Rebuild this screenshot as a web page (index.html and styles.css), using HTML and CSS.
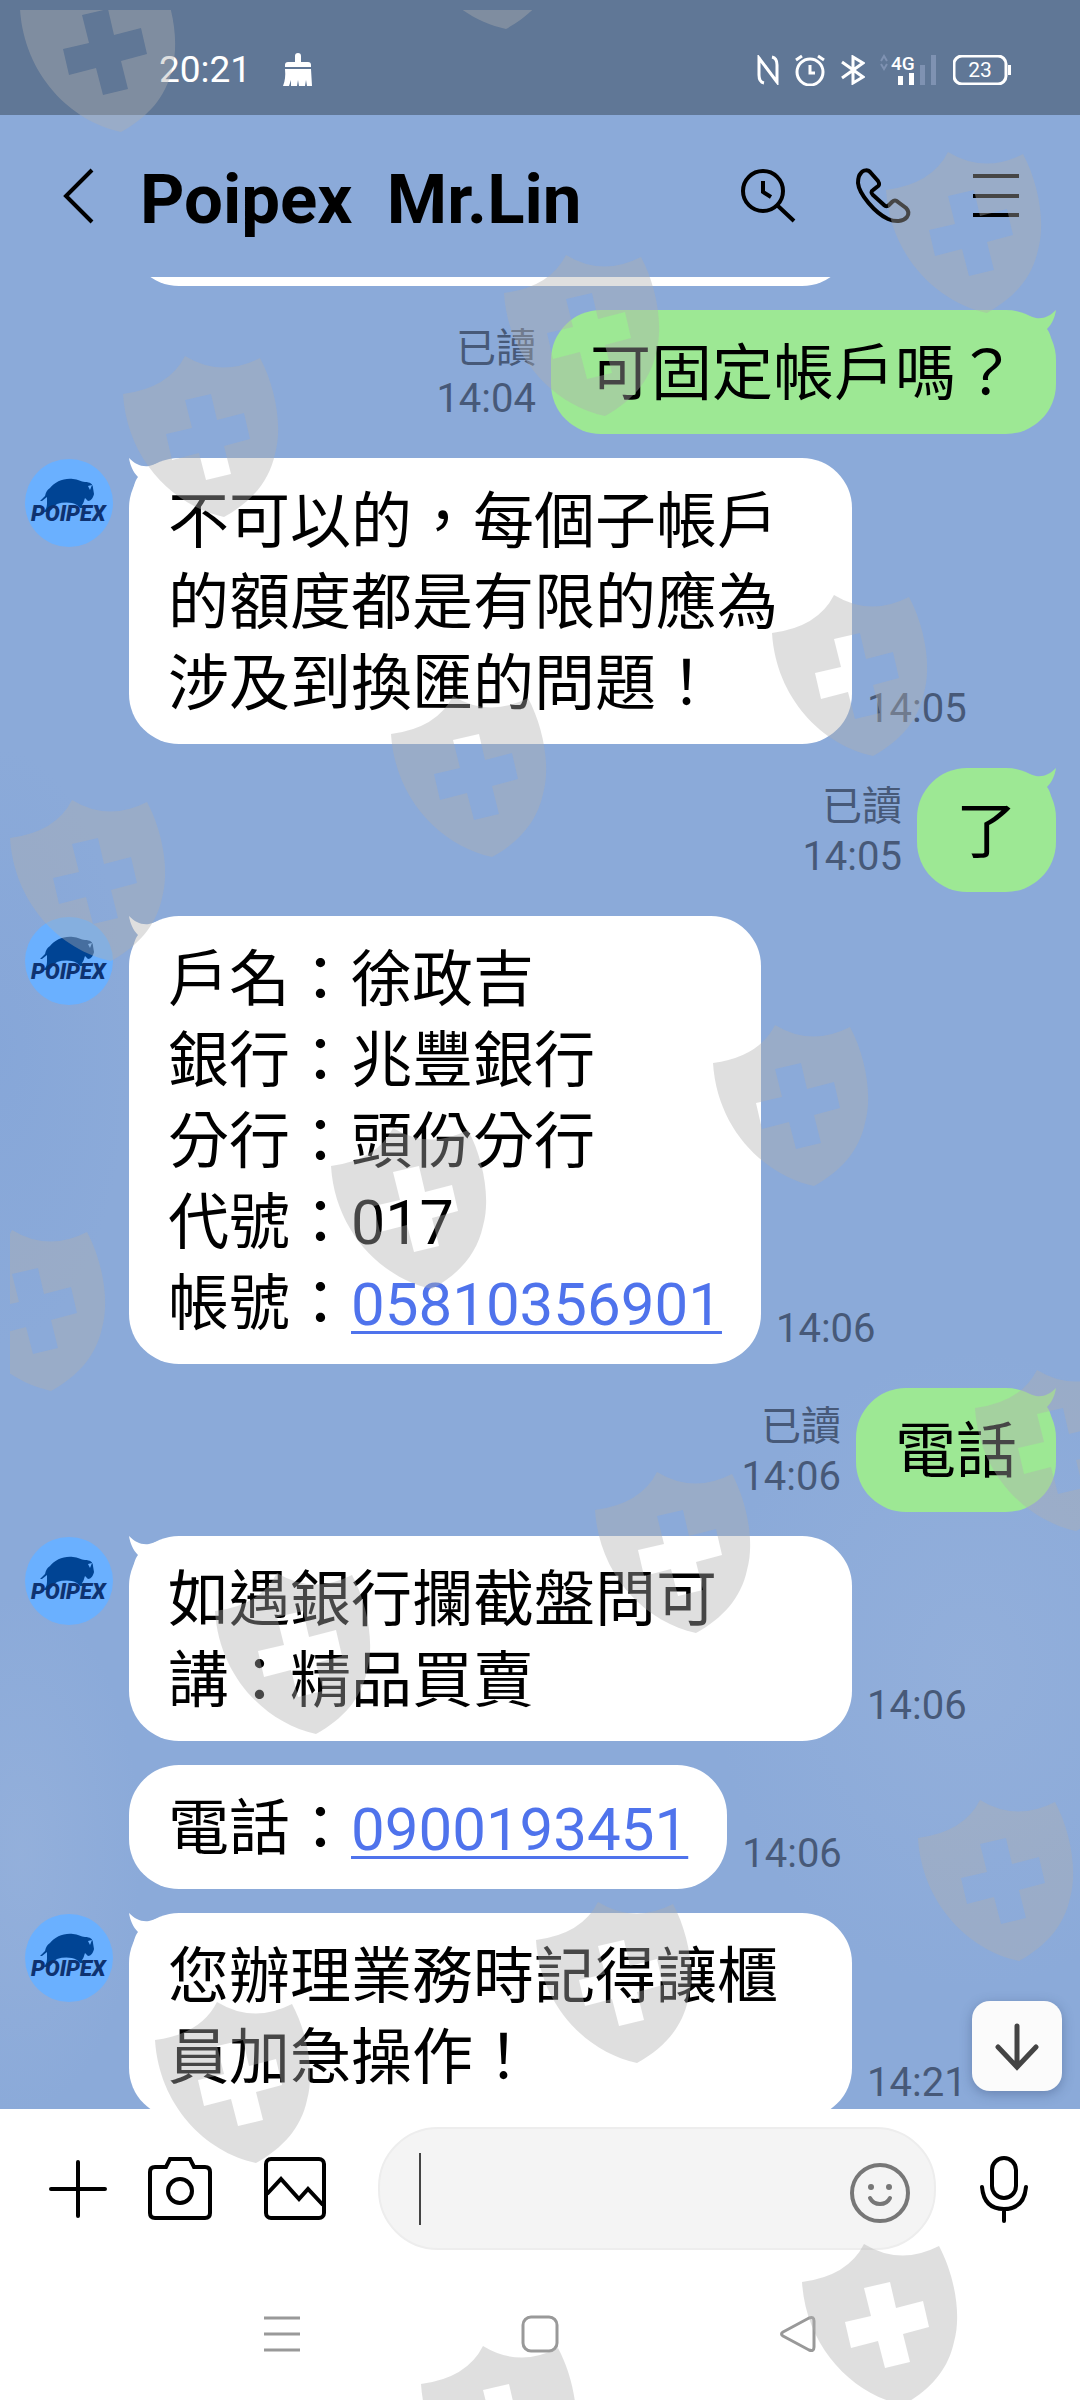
FILE: index.html
```html
<!DOCTYPE html>
<html lang="zh-TW">
<head>
<meta charset="utf-8">
<meta name="viewport" content="width=device-width, initial-scale=1">
<title>Poipex Mr.Lin</title>
<link rel="stylesheet" href="styles.css">
</head>
<body>
<svg class="defs" width="0" height="0" aria-hidden="true">
  <defs>
    <symbol id="tail" viewBox="0 0 36 36"><path d="M0 0C6 6 12 9 20 8L34 4V30L4 36C4 29 6 23 9 19C4 14 1 7 0 0Z"/></symbol>
    <symbol id="avatar" viewBox="0 0 90 90">
      <circle cx="45" cy="45" r="44" fill="#6ab0ff"/>
      <path fill="#004494" d="M16 43L21 38C22 34 23 32 26 30C31 24 39 20 49 21C54 21 57 24 61 24C66 24 69 26 69 30L70 36C69 40 67 43 64 43L61 40C60 42 60 45 58 47L61 50H56L53 47C47 44 40 44 33 46L29 49C28 52 26 54 19 54C23 51 23 48 23 44V39L18 43Z"/>
      <path d="M64 28l4-1-2 5z" fill="#6ab0ff"/>
      <text x="7" y="63" font-family="Roboto, sans-serif" font-size="22" font-weight="900" font-style="italic" fill="#0e3270">POIPEX</text>
    </symbol>
    <symbol id="shield" viewBox="0 0 160 166">
      <path fill-rule="evenodd" d="M0 40Q46 34 62 2Q98 24 137 4C152 32 160 72 152 100C146 128 128 148 101 163C50 152 4 105 0 40ZM62 46L69 74L43 80L49 106L76 99L83 126L108 120L101 92L127 85L121 59L94 66L88 40Z"/>
    </symbol>
  </defs>
</svg>

<div class="screen">
  <div class="status">
    <span class="clock">20:21</span>
    <svg class="broom" width="30" height="34" viewBox="0 0 30 34" fill="#fff"><path d="M12 3Q12 0 15 0T18 3V9H25Q28 9 28 12V14H2V12Q2 9 5 9H12ZM2 16H28L29 33H24L23 27L22 33H16L15 27L14 33H8L8 27L6 33H0Q3 26 2 16Z"/></svg>
    <div class="indicators">
      <svg width="22" height="30" viewBox="0 0 22 30" fill="none" stroke="#fff" stroke-width="3"><path d="M7 28Q2 27 2 20V3L20 27V10Q20 3 15 2M2 3L14 19M8 11L20 27"/></svg>
      <svg width="30" height="32" viewBox="0 0 30 32" fill="none" stroke="#fff" stroke-width="3"><circle cx="15" cy="18" r="13"/><path d="M15 11V19H20M1 6L7 2M29 6L23 2"/></svg>
      <svg width="24" height="30" viewBox="0 0 24 30" fill="none" stroke="#fff" stroke-width="3"><path d="M1 7L22 22L12 28V2L22 8L1 23"/></svg>
      <svg class="signal" width="56" height="32" viewBox="0 0 56 32" fill="#fff"><path d="M0 7L3 2L6 7M0 10L3 15L6 10" fill="none" stroke="#7f92b2" stroke-width="2"/><text x="10" y="16" font-family="Roboto, sans-serif" font-size="19" font-weight="500">4G</text><path d="M17 22h5v9h-5zM28 19h5v12h-5z"/><path fill="#7f92b2" d="M39 11h5v20h-5zM50 1h5v30h-5z"/></svg>
      <svg width="58" height="30" viewBox="0 0 58 30"><rect x="1" y="1" width="52" height="28" rx="8" fill="none" stroke="#fff" stroke-width="3"/><path d="M55 10h3v10h-3z" fill="#fff"/><text x="27" y="22" text-anchor="middle" font-family="Roboto, sans-serif" font-size="21" fill="#fff">23</text></svg>
    </div>
  </div>

  <header class="header">
    <button class="icon" type="button" aria-label="返回"><svg width="60" height="60" viewBox="0 0 60 60"><path d="M42 4L16 30L42 56"/></svg></button>
    <h1 class="title">Poipex  Mr.Lin</h1>
    <div class="actions">
      <button class="icon" type="button" aria-label="搜尋"><svg width="60" height="60" viewBox="0 0 60 60"><circle cx="23" cy="25" r="20"/><path d="M38 40L54 55M23 15V26L31 31"/></svg></button>
      <button class="icon" type="button" aria-label="通話"><svg width="60" height="60" viewBox="0 0 60 60"><path d="M8 7C10 4 15 3 18 7L25 15C27 18 26 20 24 21L20 24C18 25 18 27 20 29L31 39C33 41 35 40 36 39L39 36C41 34 43 34 45 36L53 42C56 45 56 48 54 51C50 56 42 56 35 53C22 47 6 28 5 17C5 12 6 9 8 7Z"/></svg></button>
      <button class="icon" type="button" aria-label="選單"><svg width="60" height="60" viewBox="0 0 60 60"><path d="M7 10H53M7 30H53M7 49H53"/></svg></button>
    </div>
  </header>

  <main class="chat">
    <div class="log">
      <div class="row earlier"><span class="spacer"></span><div class="bubble full">&nbsp;</div></div>

      <div class="row mine">
        <div class="meta"><span>已讀</span><time>14:04</time></div>
        <div class="bubble">可固定帳戶嗎？<svg class="tail" width="36" height="36"><use href="#tail"/></svg></div>
      </div>

      <div class="row">
        <svg class="face" width="90" height="90"><use href="#avatar"/></svg>
        <div class="bubble">不可以的，每個子帳戶的額度都是有限的應為涉及到換匯的問題！<svg class="tail" width="36" height="36"><use href="#tail"/></svg></div>
        <div class="meta"><time>14:05</time></div>
      </div>

      <div class="row mine">
        <div class="meta"><span>已讀</span><time>14:05</time></div>
        <div class="bubble">了<svg class="tail" width="36" height="36"><use href="#tail"/></svg></div>
      </div>

      <div class="row">
        <svg class="face" width="90" height="90"><use href="#avatar"/></svg>
        <div class="bubble">戶名：徐政吉<br>銀行：兆豐銀行<br>分行：頭份分行<br>代號：017<br>帳號：<a href="tel:05810356901">05810356901</a><svg class="tail" width="36" height="36"><use href="#tail"/></svg></div>
        <div class="meta"><time>14:06</time></div>
      </div>

      <div class="row mine">
        <div class="meta"><span>已讀</span><time>14:06</time></div>
        <div class="bubble">電話<svg class="tail" width="36" height="36"><use href="#tail"/></svg></div>
      </div>

      <div class="row">
        <svg class="face" width="90" height="90"><use href="#avatar"/></svg>
        <div class="bubble">如遇銀行攔截盤問可講：精品買賣<svg class="tail" width="36" height="36"><use href="#tail"/></svg></div>
        <div class="meta"><time>14:06</time></div>
      </div>

      <div class="row">
        <span class="spacer"></span>
        <div class="bubble">電話：<a href="tel:0900193451">0900193451</a></div>
        <div class="meta"><time>14:06</time></div>
      </div>

      <div class="row">
        <svg class="face" width="90" height="90"><use href="#avatar"/></svg>
        <div class="bubble">您辦理業務時記得讓櫃員加急操作！<svg class="tail" width="36" height="36"><use href="#tail"/></svg></div>
        <div class="meta"><time>14:21</time></div>
      </div>
    </div>
    <button class="to-bottom" type="button" aria-label="最新訊息"><svg width="50" height="50" viewBox="0 0 50 50"><path d="M25 5V45M6 26L25 46L44 26"/></svg></button>
  </main>

  <form class="composer">
    <button class="icon" type="button" aria-label="新增"><svg width="58" height="60" viewBox="0 0 58 60"><path stroke-linecap="round" d="M2 30H56M29 3V57"/></svg></button>
    <button class="icon" type="button" aria-label="相機"><svg width="64" height="64" viewBox="0 0 64 64"><path d="M2 15Q2 10 7 10H18L22 2H42L46 10H57Q62 10 62 15V56Q62 61 57 61H7Q2 61 2 56Z"/><circle cx="32" cy="34" r="12"/></svg></button>
    <button class="icon gallery" type="button" aria-label="相簿"><svg width="62" height="64" viewBox="0 0 62 64"><rect x="2" y="2" width="58" height="59" rx="5"/><path d="M3 37L17 22L35 42L44 32L59 48"/></svg></button>
    <label class="field">
      <span class="caret"></span>
      <input class="entry" type="text" aria-label="訊息">
      <svg class="smile" width="60" height="70" viewBox="0 0 60 70"><circle cx="30" cy="39" r="28"/><path stroke-linecap="round" d="M20 44Q23 50 30 50T40 44"/><circle class="eye" cx="21" cy="33" r="3"/><circle class="eye" cx="39" cy="33" r="3"/></svg>
    </label>
    <button class="icon mic" type="button" aria-label="語音"><svg width="60" height="70" viewBox="0 0 60 70"><rect x="18" y="4" width="24" height="40" rx="12"/><path stroke-linecap="round" d="M8 33Q10 55 30 55T52 33M30 55V67"/></svg></button>
  </form>

  <nav class="system">
    <button class="icon" type="button" aria-label="最近"><svg width="40" height="40" viewBox="0 0 40 40"><path d="M2 4H38M2 20H38M2 36H38"/></svg></button>
    <button class="icon" type="button" aria-label="主畫面"><svg width="40" height="40" viewBox="0 0 40 40"><rect x="3" y="3" width="34" height="34" rx="8"/></svg></button>
    <button class="icon" type="button" aria-label="上一頁"><svg width="40" height="40" viewBox="0 0 40 40"><path d="M5 18L31 4Q36 2 36 7V33Q36 38 31 36L5 22Q2 20 5 18Z"/></svg></button>
  </nav>

  <div class="watermark" aria-hidden="true">
    <svg width="100%" height="100%">
      <use href="#shield" width="160" height="166" x="10" y="-41"/>
      <use href="#shield" width="160" height="166" x="395" y="-144"/>
      <use href="#shield" width="160" height="166" x="876" y="140"/>
      <use href="#shield" width="160" height="166" x="494" y="243"/>
      <use href="#shield" width="160" height="166" x="113" y="344"/>
      <use href="#shield" width="160" height="166" x="762" y="583"/>
      <use href="#shield" width="160" height="166" x="381" y="684"/>
      <use href="#shield" width="160" height="166" x="0" y="788"/>
      <use href="#shield" width="160" height="166" x="703" y="1013"/>
      <use href="#shield" width="160" height="166" x="321" y="1116"/>
      <use href="#shield" width="160" height="166" x="-60" y="1218"/>
      <use href="#shield" width="160" height="166" x="965" y="1358"/>
      <use href="#shield" width="160" height="166" x="585" y="1460"/>
      <use href="#shield" width="160" height="166" x="205" y="1561"/>
      <use href="#shield" width="160" height="166" x="908" y="1788"/>
      <use href="#shield" width="160" height="166" x="526" y="1890"/>
      <use href="#shield" width="160" height="166" x="145" y="1990"/>
      <use href="#shield" width="160" height="166" x="792" y="2232"/>
      <use href="#shield" width="160" height="166" x="411" y="2334"/>
    </svg>
  </div>
</div>
</body>
</html>
```
FILE: styles.css
```css
* {
  box-sizing: border-box;
}

body {
  margin: 0;
  font-family: Roboto, "Noto Sans CJK TC", sans-serif;
  color: #000;
}

svg {
  display: block;
  flex: none;
}

.defs {
  position: absolute;
}

.screen {
  position: relative;
  display: flex;
  flex-direction: column;
  height: 100vh;
  overflow: hidden;
  background: #8baad9;
}

/* Phone status bar */
.status {
  display: flex;
  align-items: center;
  flex: none;
  height: 115px;
  padding: 24px 69px 0 159px;
  background: #607796;
  color: #fff;
}

.clock {
  font-size: 37px;
  line-height: 40px;
}

.broom {
  margin-left: 32px;
}

.indicators {
  display: flex;
  align-items: center;
  gap: 16px;
  margin-left: auto;
}

.signal {
  overflow: visible;
}

/* Conversation header */
.header {
  display: flex;
  align-items: center;
  flex: none;
  height: 162px;
  padding: 0 54px 0 50px;
}

.title {
  margin: 0 0 0 30px;
  padding-top: 8px;
  font-size: 69px;
  line-height: 72px;
  font-weight: 700;
  white-space: pre;
}

.actions {
  display: flex;
  gap: 53px;
  margin-left: auto;
}

.icon {
  flex: none;
  padding: 0;
  border: 0;
  background: none;
}

.icon svg {
  fill: none;
  stroke: #000;
  stroke-width: 4;
}

/* Messages */
.chat {
  position: relative;
  flex: 1 1 0;
  min-height: 0;
  overflow: hidden;
  background:
    radial-gradient(ellipse 260px 320px at 90% 76%, rgba(160, 184, 222, 0.35), transparent),
    radial-gradient(ellipse 120px 260px at 2% 86%, rgba(160, 184, 222, 0.4), transparent),
    radial-gradient(ellipse 130px 300px at 0 42%, rgba(120, 156, 214, 0.25), transparent);
}

.log {
  display: flex;
  flex-direction: column;
  gap: 24px;
  padding: 0 24px;
}

.row {
  display: flex;
  align-items: flex-start;
  gap: 15px;
}

/* Scrolled almost out of view */
.earlier {
  margin-top: -115px;
}

.mine {
  justify-content: flex-end;
}

.face,
.spacer {
  flex: none;
  width: 90px;
}

.bubble {
  position: relative;
  max-width: 723px;
  padding: 24px 39px 19px;
  border-radius: 50px;
  background: #fff;
  font-size: 61px;
  line-height: 81px;
}

.full {
  width: 723px;
}

.mine .bubble {
  background: #9de894;
}

.bubble a {
  color: #4f73ec;
  font-size: 60px;
  text-decoration-thickness: 3px;
  text-underline-offset: 6px;
}

.tail {
  position: absolute;
  top: 0;
  left: 0;
  fill: #fff;
}

.mine .tail {
  left: auto;
  right: 0;
  fill: #9de894;
  transform: scaleX(-1);
}

.meta {
  display: flex;
  flex-direction: column;
  align-self: flex-end;
  align-items: flex-end;
  padding-bottom: 10px;
  font-size: 40px;
  line-height: 50px;
  color: #475978;
}

.to-bottom {
  position: absolute;
  right: 18px;
  bottom: 18px;
  padding: 20px;
  border: 0;
  border-radius: 18px;
  background: #fbfbfb;
  box-shadow: 0 3px 12px rgba(40, 60, 100, 0.35);
}

.to-bottom svg {
  fill: none;
  stroke: #444;
  stroke-width: 5;
  stroke-linecap: round;
}

/* Message entry */
.composer {
  display: flex;
  align-items: center;
  flex: none;
  gap: 41px;
  padding: 18px 46px 18px 49px;
  background: #fff;
}

.gallery {
  margin: 0 11px;
}

.field {
  display: flex;
  align-items: center;
  flex: 1 1 0;
  min-width: 0;
  height: 123px;
  padding: 0 24px 0 39px;
  border: 2px solid #ededed;
  border-radius: 60px;
  background: #f4f4f4;
}

.caret {
  flex: none;
  width: 2px;
  height: 72px;
  background: #444;
}

.entry {
  flex: 1 1 0;
  min-width: 0;
  border: 0;
  outline: 0;
  background: none;
  font: inherit;
  font-size: 40px;
}

.smile {
  fill: none;
  stroke: #777;
  stroke-width: 4;
}

.smile .eye {
  fill: #777;
  stroke: none;
}

.mic {
  margin-left: -3px;
}

/* System navigation */
.system {
  display: flex;
  align-items: center;
  justify-content: space-between;
  flex: none;
  height: 132px;
  padding: 0 262px;
  background: #fff;
}

.system .icon svg {
  stroke: #999;
  stroke-width: 3;
}

.watermark {
  position: absolute;
  inset: 10px 0 0 10px;
  overflow: hidden;
  pointer-events: none;
}

.watermark svg {
  fill: rgba(174, 174, 174, 0.4);
}
```
